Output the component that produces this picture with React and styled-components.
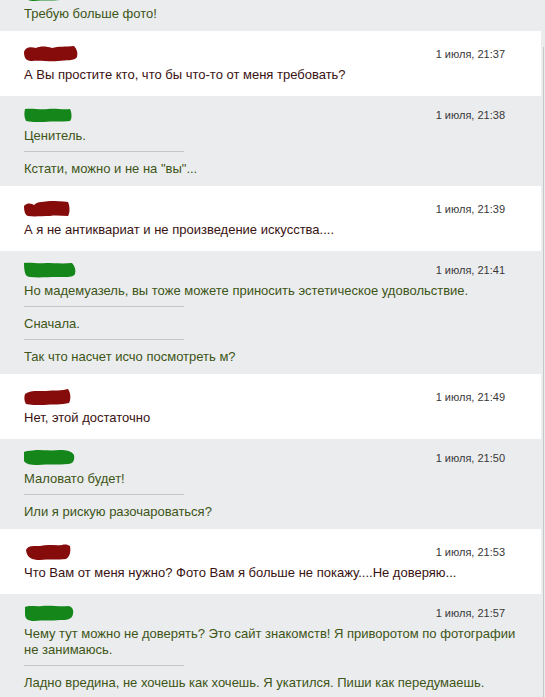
import React from "react";
import styled, { createGlobalStyle } from "styled-components";

const Global = createGlobalStyle`
  html, body { margin: 0; padding: 0; background: #ebecee; }
  body { font-family: "Liberation Sans", Arial, sans-serif; }
`;

const Page = styled.div`
  width: 545px;
  height: 697px;
  overflow: hidden;
  display: flex;
  background: #ebecee;
`;

const Feed = styled.div`
  width: 541px;
  flex: none;
  display: flex;
  flex-direction: column;
  margin-top: -26px;
`;

const Track = styled.div`
  width: 4px;
  flex: none;
  display: flex;
  justify-content: center;
  padding-top: 47px;
  box-sizing: border-box;
`;

const TrackLine = styled.div`
  width: 1px;
  background: #c6c7c9;
`;

const Row = styled.div`
  background: ${(p) => (p.$mine ? "#ebecee" : "#ffffff")};
  padding: ${(p) => (p.$mine ? "11px 19px 9px 24px" : "15px 19px 13px 24px")};
  display: flex;
  flex-direction: column;
`;

const Header = styled.div`
  display: flex;
  justify-content: space-between;
  align-items: center;
  height: 16px;
  margin-bottom: 5px;
  padding-right: 17px;
`;

const Time = styled.span`
  font-size: 11px;
  line-height: 16px;
  color: #383838;
`;

const Message = styled.p`
  margin: 0;
  font-size: 13px;
  line-height: 16px;
  color: ${(p) => (p.$mine ? "#3d5516" : "#3a1212")};
`;

const Divider = styled.hr`
  width: 160px;
  height: 1px;
  margin: 7px 0 9px;
  border: 0;
  background: #c5c6c8;
`;

const Blot = styled.svg`
  display: block;
  margin-left: -2px;
  flex: none;
`;

const RED = "#860c0c";
const GREEN = "#15861a";

const SHAPES = [
  "M3 2 C8 0 14 2 20 1 C28 0 38 2 46 1 C50 1 52 5 51 9 C50 15 44 15 38 15 C30 16 20 15 12 16 C6 16 3 14 3 9 Z",
  "M2 6 C4 0 10 1 14 2 C18 0 24 0 30 2 C36 0 44 1 52 0 C55 3 56 7 55 11 C53 15 44 14 36 15 C28 16 18 14 10 15 C5 15 2 13 2 6 Z",
  "M3 2 C10 1 18 3 26 2 C34 1 40 3 48 2 C50 6 50 12 48 14 C40 15 30 14 22 15 C14 15 8 15 4 14 C2 10 2 6 3 2 Z",
  "M2 5 C6 1 10 3 12 4 C16 0 22 1 28 0 C34 0 40 0 46 1 C48 5 48 12 46 15 C40 15 34 14 28 15 C20 15 12 16 6 15 C3 14 2 10 2 5 Z",
  "M2 1 C8 0 16 2 24 1 C32 1 40 2 50 1 C53 4 54 8 53 12 C51 16 42 15 34 15 C26 15 16 16 8 15 C4 15 2 12 2 1 Z",
  "M3 5 C8 1 16 2 24 2 C32 1 40 2 46 0 C49 4 49 11 47 14 C40 16 30 15 22 16 C14 16 8 16 4 15 C2 12 2 8 3 5 Z",
  "M2 2 C6 0 10 1 14 0 C20 0 30 1 38 0 C44 0 50 1 52 5 C53 10 51 14 46 14 C36 15 26 14 16 15 C8 15 4 14 2 11 Z",
  "M4 6 C6 1 12 2 18 2 C26 0 34 2 40 1 C44 0 46 1 48 2 C49 7 48 13 44 15 C36 16 26 15 18 16 C10 16 5 14 4 6 Z",
];

function Scribble({ color, shape }) {
  return (
    <Blot width="56" height="16" viewBox="0 0 56 16" aria-hidden="true">
      <path d={SHAPES[shape % SHAPES.length]} fill={color} />
    </Blot>
  );
}

const rows = [
  { mine: true, time: "", msgs: ["Требую больше фото!"] },
  { mine: false, time: "1 июля, 21:37", msgs: ["А Вы простите кто, что бы что-то от меня требовать?"] },
  { mine: true, time: "1 июля, 21:38", msgs: ["Ценитель.", "Кстати, можно и не на \"вы\"..."] },
  { mine: false, time: "1 июля, 21:39", msgs: ["А я не антиквариат и не произведение искусства...."] },
  {
    mine: true,
    time: "1 июля, 21:41",
    msgs: [
      "Но мадемуазель, вы тоже можете приносить эстетическое удовольствие.",
      "Сначала.",
      "Так что насчет исчо посмотреть м?",
    ],
  },
  { mine: false, time: "1 июля, 21:49", msgs: ["Нет, этой достаточно"] },
  { mine: true, time: "1 июля, 21:50", msgs: ["Маловато будет!", "Или я рискую разочароваться?"] },
  {
    mine: false,
    time: "1 июля, 21:53",
    msgs: ["Что Вам от меня нужно? Фото Вам я больше не покажу....Не доверяю..."],
  },
  {
    mine: true,
    time: "1 июля, 21:57",
    msgs: [
      "Чему тут можно не доверять? Это сайт знакомств! Я приворотом по фотографии не занимаюсь.",
      "Ладно вредина, не хочешь как хочешь. Я укатился. Пиши как передумаешь.",
    ],
  },
];

export default function App() {
  return (
    <>
      <Global />
      <Page>
        <Feed>
          {rows.map((r, i) => (
            <Row key={i} $mine={r.mine}>
              <Header>
                <Scribble color={r.mine ? GREEN : RED} shape={i} />
                <Time>{r.time}</Time>
              </Header>
              {r.msgs.map((m, j) => (
                <React.Fragment key={j}>
                  {j > 0 && <Divider />}
                  <Message $mine={r.mine}>{m}</Message>
                </React.Fragment>
              ))}
            </Row>
          ))}
        </Feed>
        <Track>
          <TrackLine />
        </Track>
      </Page>
    </>
  );
}
